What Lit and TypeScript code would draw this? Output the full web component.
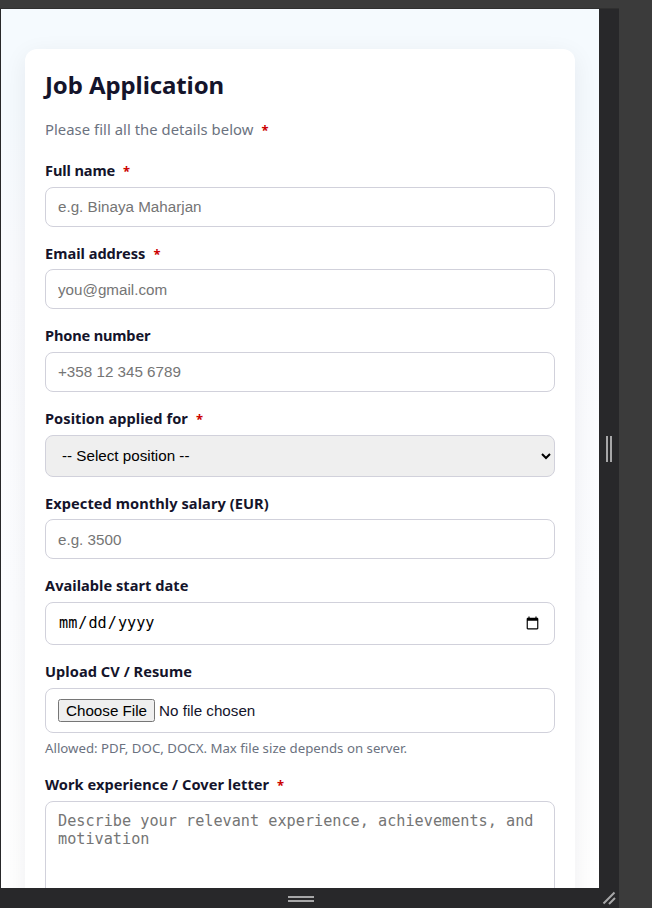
import { LitElement, html, css, nothing } from "lit";
import { customElement, property } from "lit/decorators.js";

@customElement("form-label")
class FormLabel extends LitElement {
  @property() text = "";
  @property() tracking = "0";
  @property({ type: Boolean }) required = false;

  static styles = css`
    :host {
      display: block;
      font: 700 14.6px/16.6px "Noto Sans", sans-serif;
      white-space: nowrap;
    }
    .star {
      color: #cc0000;
      margin-left: 8px;
      font-size: 13px;
      line-height: 0;
    }
  `;

  render() {
    return html`<span style="letter-spacing:${this.tracking}px">${this.text}</span>${this.required
        ? html`<span class="star">*</span>`
        : nothing}`;
  }
}

@customElement("app-root")
class AppRoot extends LitElement {
  static styles = css`
    :host {
      display: grid;
      grid-template-columns: 598px 20px;
      grid-template-rows: 879px 20px;
      box-sizing: border-box;
      width: 652px;
      height: 908px;
      padding: 9px 0 0 1px;
      overflow: hidden;
      background: linear-gradient(#28282a, #28282a) 0 9px / 1px 899px no-repeat,
        linear-gradient(#303030, #303030) 0 8px / 619px 1px no-repeat, #3b3b3b;
      color: #14142b;
    }
    * {
      box-sizing: border-box;
    }
    .page {
      overflow: hidden;
      padding: 40px 24px 0;
      background: linear-gradient(#f5fafe 0, #f5fafe 100px, #fafbfe 260px, #fcfdff 600px, #fff 879px);
    }
    .card {
      height: 1100px;
      padding: 20px;
      border-radius: 12px;
      background: #fff;
      box-shadow: 0 6px 24px rgba(20, 30, 40, 0.07);
    }
    h1 {
      margin: 0;
      font: 700 24px/32px "Noto Sans", sans-serif;
      letter-spacing: -0.1px;
    }
    .intro {
      height: 20px;
      margin: 18px 0 23.2px;
      font: 400 14.8px/20px "Noto Sans", sans-serif;
      color: #6b7280;
      white-space: nowrap;
    }
    .intro span {
      letter-spacing: 0.05px;
    }
    .intro b {
      margin-left: 8px;
      font-size: 13px;
      color: #cc0000;
    }
    .control {
      display: block;
      width: 100%;
      height: 40px;
      margin: 0 0 18px;
      padding: 10px 12px;
      border: 1px solid #d1d1db;
      border-radius: 8px;
      background: #fff;
      font: 15.2px "Liberation Sans", Arial, sans-serif;
      color: #000;
      outline: none;
    }
    .control::placeholder {
      color: #757575;
    }
    .select {
      height: 42px;
      background: #efefef;
    }
    .date {
      height: 43.2px;
      font-family: "DejaVu Sans Mono", monospace;
    }
    .file {
      height: 45px;
      margin-bottom: 6px;
      color: #14142b;
    }
    .area {
      height: 150px;
      resize: none;
      font-family: "DejaVu Sans Mono", monospace;
    }
    .hint {
      height: 18px;
      margin-bottom: 19.7px;
      font: 13.25px/18px "Noto Sans", sans-serif;
      color: #6b7280;
      white-space: nowrap;
    }
    form-label {
      height: 24.6px;
    }
    .side,
    .bottom,
    .corner {
      display: flex;
      align-items: center;
      justify-content: center;
      background: #28282a;
    }
    .bottom {
      padding: 2px 0 0 2px;
    }
    svg {
      display: block;
    }
  `;

  render() {
    return html`
      <main class="page">
        <form class="card">
          <h1>Job Application</h1>
          <p class="intro"><span>Please fill all the details below</span><b>*</b></p>
          <form-label text="Full name" tracking="-0.12" required></form-label>
          <input class="control" placeholder="e.g. Binaya Maharjan" />
          <form-label text="Email address" required></form-label>
          <input class="control" type="email" placeholder="you@gmail.com" />
          <form-label text="Phone number" tracking="-0.17"></form-label>
          <input class="control" type="tel" placeholder="+358 12 345 6789" />
          <form-label text="Position applied for" tracking="0.05" required></form-label>
          <select class="control select">
            <option>-- Select position --</option>
          </select>
          <form-label text="Expected monthly salary (EUR)" tracking="0.07"></form-label>
          <input class="control" type="number" placeholder="e.g. 3500" />
          <form-label text="Available start date" tracking="0.03"></form-label>
          <input class="control date" type="date" />
          <form-label text="Upload CV / Resume" tracking="0.05"></form-label>
          <input class="control file" type="file" />
          <div class="hint">Allowed: PDF, DOC, DOCX. Max file size depends on server.</div>
          <form-label text="Work experience / Cover letter" tracking="0.05" required></form-label>
          <textarea
            class="control area"
            placeholder="Describe your relevant experience, achievements, and motivation"
          ></textarea>
        </form>
      </main>
      <div class="side">
        <svg width="6" height="26" fill="#a7a7a8">
          <rect width="2" height="26" /><rect x="4" width="2" height="26" />
        </svg>
      </div>
      <div class="bottom">
        <svg width="26" height="6" fill="#a7a7a8">
          <rect width="26" height="2" /><rect y="4" width="26" height="2" />
        </svg>
      </div>
      <div class="corner">
        <svg width="14" height="14" stroke="#a7a7a8" stroke-width="2">
          <path d="M1.5 12.5 12.5 1.5M7 13 13 7" fill="none" />
        </svg>
      </div>
    `;
  }
}
